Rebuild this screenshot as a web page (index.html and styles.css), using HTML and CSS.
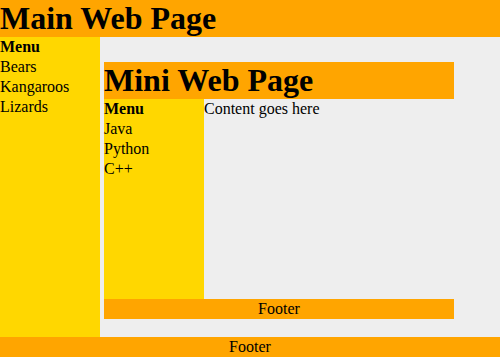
FILE: index.html
```html
<!DOCTYPE html>
<html lang="en">
<head>
  <meta charset="UTF-8" />
  <meta name="viewport" content="width=device-width, initial-scale=1.0" />
  <title>Main Web Page</title>
  <link rel="stylesheet" href="styles.css">
</head>
<body>
  <div class="page">
    <header class="head">Main Web Page</header>
    <div class="middle">
      <nav class="side">
        <div class="menu-title">Menu</div>
        <div>Bears</div>
        <div>Kangaroos</div>
        <div>Lizards</div>
      </nav>
      <main class="content">
        <div class="mini">
          <header class="head">Mini Web Page</header>
          <div class="mini-middle">
            <nav class="side">
              <div class="menu-title">Menu</div>
              <div>Java</div>
              <div>Python</div>
              <div>C++</div>
            </nav>
            <div class="mini-text">Content goes here</div>
          </div>
          <footer class="foot">Footer</footer>
        </div>
      </main>
    </div>
    <footer class="foot">Footer</footer>
  </div>
</body>
</html>
```

FILE: styles.css
```css
body {
  margin: 0;
  font-family: "Liberation Serif", "Times New Roman", serif;
  font-size: 16px;
  color: #000;
  background: #eee;
}
.page {
  width: 500px;
  height: 357px;
  display: flex;
  flex-direction: column;
}
.head {
  background: orange;
  height: 37px;
  line-height: 37px;
  font-size: 32px;
  font-weight: bold;
  white-space: nowrap;
}
.middle {
  display: flex;
  height: 300px;
}
.side {
  width: 100px;
  background: gold;
  line-height: 20px;
  flex-shrink: 0;
}
.menu-title {
  font-weight: bold;
}
.content {
  flex: 1;
  background: #eee;
  padding: 25px 0 0 4px;
}
.mini {
  width: 350px;
  height: 257px;
  display: flex;
  flex-direction: column;
}
.mini-middle {
  display: flex;
  height: 200px;
}
.mini-text {
  flex: 1;
  line-height: 20px;
}
.foot {
  background: orange;
  height: 20px;
  line-height: 20px;
  text-align: center;
}
```
